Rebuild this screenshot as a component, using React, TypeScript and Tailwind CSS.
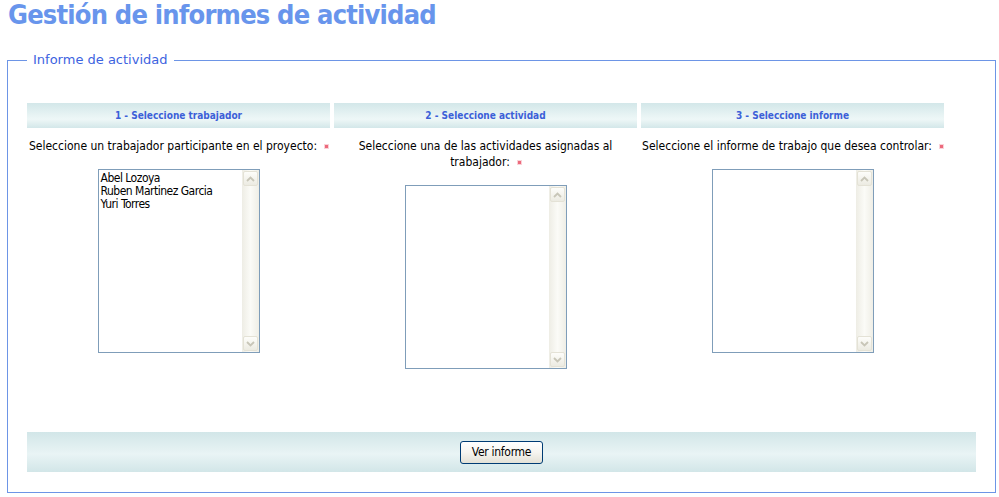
import React from "react";

const body = { fontFamily: "'DejaVu Sans Condensed', 'DejaVu Sans', sans-serif" };

function Arrow({ up }: { up: boolean }) {
  return (
    <svg width="9" height="6" viewBox="0 0 9 6">
      <path
        d={up ? "M1 5 L4.5 1.5 L8 5" : "M1 1 L4.5 4.5 L8 1"}
        stroke="#c8c6b8"
        strokeWidth="1.8"
        fill="none"
      />
    </svg>
  );
}

function ScrollBtn({ up }: { up: boolean }) {
  return (
    <div className="w-[15px] h-[15px] mx-auto rounded-[2px] border border-[#e4e2d6] bg-gradient-to-b from-[#fdfdfa] to-[#ecebe2] flex items-center justify-center">
      <Arrow up={up} />
    </div>
  );
}

function ListBox({ items }: { items: string[] }) {
  return (
    <div className="mx-auto w-[162px] h-[184px] border border-[#7f9db9] bg-white flex">
      <div
        className="flex-1 pl-[2px] pt-[2px] text-[12px] leading-[13px] text-black text-left"
        style={{ fontFamily: "'DejaVu Sans Condensed', 'DejaVu Sans', sans-serif", letterSpacing: "-0.5px" }}
      >
        {items.map((i) => (
          <div key={i}>{i}</div>
        ))}
      </div>
      <div className="w-[17px] h-full flex flex-col justify-between py-[1px] bg-gradient-to-r from-[#eeede5] via-[#fbfbf7] to-[#efeee6]">
        <ScrollBtn up />
        <ScrollBtn up={false} />
      </div>
    </div>
  );
}

function Star() {
  return (
    <span className="inline-block w-[3px] h-[3px] ml-[8px] align-middle bg-[#ec6a7c] shadow-[0_0_0_1px_#fad2d8]" />
  );
}

function Column({
  title,
  text,
  items,
}: {
  title: string;
  text: string;
  items: string[];
}) {
  return (
    <div className="w-[303px] flex flex-col">
      <div
        className="h-[25px] flex items-center justify-center font-bold text-[10px] text-[#3c60d8] bg-[linear-gradient(to_bottom,#d3e7e9_0%,#eaf5f5_55%,#eef7f7_65%,#d3e7e9_100%)]"
        style={{ fontFamily: "'DejaVu Sans Condensed', 'DejaVu Sans', sans-serif" }}
      >
        {title}
      </div>
      <div
        className="mt-[10px] text-center text-[12px] leading-[16px] text-black"
        style={body}
      >
        {text}
        <Star />
      </div>
      <div className="mt-[15px]">
        <ListBox items={items} />
      </div>
    </div>
  );
}

export default function App() {
  return (
    <div className="w-[999px] h-[497px] bg-white overflow-hidden relative">
      <div
        className="pl-[8px] h-[30px] leading-[30px] font-bold text-[27px] text-[#6895ec] whitespace-nowrap"
        style={{ fontFamily: "'DejaVu Sans Condensed', 'DejaVu Sans', sans-serif", letterSpacing: "-0.8px" }}
      >
        Gestión de informes de actividad
      </div>
      <fieldset className="mt-[22px] ml-[7px] w-[989px] h-[441px] border border-[#6d95e6] px-[19px] pb-[20px] pt-[35px]">
        <legend
          className="px-[6px] text-[13px] leading-[16px] text-[#3d63df]"
          style={{ fontFamily: "'DejaVu Sans', sans-serif" }}
        >
          Informe de actividad
        </legend>
        <div className="flex gap-[4px]">
          <Column
            title="1 - Seleccione trabajador"
            text="Seleccione un trabajador participante en el proyecto:"
            items={["Abel Lozoya", "Ruben Martinez Garcia", "Yuri Torres"]}
          />
          <Column
            title="2 - Seleccione actividad"
            text="Seleccione una de las actividades asignadas al trabajador:"
            items={[]}
          />
          <Column
            title="3 - Seleccione informe"
            text="Seleccione el informe de trabajo que desea controlar:"
            items={[]}
          />
        </div>
        <div className="mt-[63px] w-[949px] h-[40px] flex items-center justify-center bg-[linear-gradient(to_bottom,#d2e6e8_0%,#e9f4f5_55%,#d2e6e8_100%)]">
          <button
            className="w-[83px] h-[23px] rounded-[3px] border border-[#003c74] bg-gradient-to-b from-white via-[#f6f5f0] to-[#e3e1d6] text-[12px] text-black"
            style={{ ...body, letterSpacing: "-0.3px" }}
          >
            Ver informe
          </button>
        </div>
      </fieldset>
    </div>
  );
}
